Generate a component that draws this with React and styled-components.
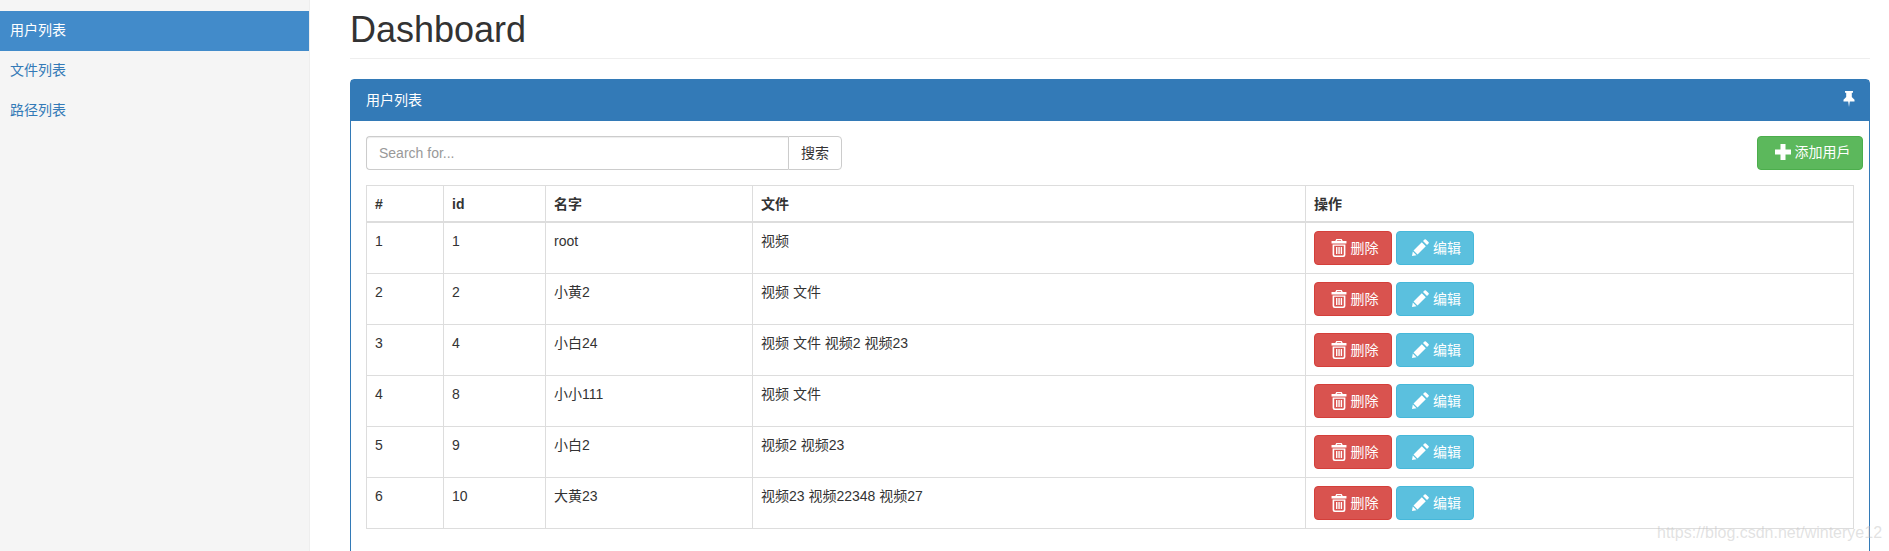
import React from 'react';
import styled, { createGlobalStyle } from 'styled-components';

const GlobalStyle = createGlobalStyle`
    html, body {
        margin: 0;
        padding: 0;
        height: 551px;
        overflow: hidden;
        background: #fff;
        color: #333;
        font-family: "Liberation Sans", "Noto Sans CJK SC", sans-serif;
        font-size: 14px;
        line-height: 20px;
    }
    * { box-sizing: border-box; }
`;

const users = [
    { no: 1, id: 1, name: 'root', files: '视频' },
    { no: 2, id: 2, name: '小黄2', files: '视频 文件' },
    { no: 3, id: 4, name: '小白24', files: '视频 文件 视频2 视频23' },
    { no: 4, id: 8, name: '小小111', files: '视频 文件' },
    { no: 5, id: 9, name: '小白2', files: '视频2 视频23' },
    { no: 6, id: 10, name: '大黄23', files: '视频23 视频22348 视频27' },
];

const columns = [
    { title: '#', width: 77 },
    { title: 'id', width: 102 },
    { title: '名字', width: 207 },
    { title: '文件', width: 553 },
    { title: '操作', width: 548 },
];

const Page = styled.div`
    display: flex;
    height: 551px;
    overflow: hidden;
`;

const Sidebar = styled.nav`
    width: 310px;
    flex: none;
    padding-top: 11px;
    background: #f5f5f5;
    border-right: 1px solid #eee;
`;

const NavItem = styled.a`
    display: block;
    height: 40px;
    padding: 9px 10px;
    background: ${props => props.$active ? '#428bca' : 'transparent'};
    color: ${props => props.$active ? '#fff' : '#337ab7'};
`;

const Main = styled.main`
    flex: 1;
    min-width: 0;
    padding: 0 19px 0 40px;
`;

const Title = styled.h1`
    margin: 0 0 20px;
    height: 59px;
    padding-top: 10px;
    border-bottom: 1px solid #eee;
    font-size: 36px;
    font-weight: 500;
    line-height: 40px;
`;

const Panel = styled.section`
    height: 600px;
    border: 1px solid #337ab7;
    border-radius: 4px;
`;

const PanelHeading = styled.header`
    display: flex;
    align-items: center;
    justify-content: space-between;
    height: 41px;
    padding: 0 13px 2px 15px;
    background: #337ab7;
    color: #fff;

    svg { margin-top: -2px; }
`;

const PanelBody = styled.div`
    padding: 15px;
`;

const Toolbar = styled.div`
    display: flex;
    justify-content: space-between;
    margin-bottom: 15px;
`;

const SearchGroup = styled.div`
    display: flex;
    width: 476px;
    height: 34px;
`;

const SearchInput = styled.input`
    flex: 1;
    min-width: 0;
    padding: 6px 12px;
    border: 1px solid #ccc;
    border-right: 0;
    border-radius: 4px 0 0 4px;
    color: #555;
    font: inherit;
    box-shadow: inset 0 1px 1px rgba(0, 0, 0, .075);
    &::placeholder { color: #999; opacity: 1; }
`;

const SearchButton = styled.button`
    width: 54px;
    padding: 0;
    background: #fff;
    border: 1px solid #ccc;
    border-radius: 0 4px 4px 0;
    color: #333;
    font: inherit;
`;

const Button = styled.button`
    display: inline-flex;
    align-items: center;
    justify-content: center;
    gap: 4px;
    width: ${props => props.$width || 78}px;
    height: 34px;
    padding: 0 0 0 3px;
    background: ${props => props.$bg};
    border: 1px solid ${props => props.$line};
    border-radius: 4px;
    color: #fff;
    font: inherit;
`;

const AddButton = styled(Button)`
    margin-right: -9px;
    padding: 0 0 2px 5px;
`;

const Table = styled.table`
    width: 1488px;
    table-layout: fixed;
    border-collapse: collapse;
`;

const Th = styled.th`
    height: 36px;
    padding: 8px 8px 6px;
    border: 1px solid #ddd;
    border-bottom-width: 2px;
    font-weight: 700;
    text-align: left;
    vertical-align: middle;
`;

const Td = styled.td`
    height: 51px;
    padding: 8px;
    border: 1px solid #ddd;
    vertical-align: top;
`;

const Actions = styled.div`
    display: flex;
    gap: 4px;
`;

const Watermark = styled.div`
    position: absolute;
    left: 1657px;
    top: 523px;
    color: rgba(190, 190, 190, .45);
    font-size: 16px;
    line-height: 20px;
    white-space: nowrap;
`;

const PinIcon = () => (
    <svg width="14" height="16" viewBox="0 0 14 16" fill="#fff">
        <path d="M3 0h8v1.800H9.800v4.200L12.500 8.800V10.500H7.800L7 16l-.8-5.500H1.500V8.800L4.200 6V1.800H3z" />
    </svg>
);

const PlusIcon = () => (
    <svg width="16" height="16" viewBox="0 0 16 16" fill="#fff">
        <path d="M5.500 0h5v5.500H16v5h-5.500V16h-5v-5.500H0v-5h5.500z" />
    </svg>
);

const TrashIcon = () => (
    <svg width="16" height="18" viewBox="0 0 15 18" fill="#fff" preserveAspectRatio="none">
        <path d="M5 0h5l1 2h3.500v2.500H.5V2H4zm.8 1.200L5.300 2h4.400l-.5-.8z" />
        <path fillRule="evenodd" d="M1.500 5.500h12V16a2 2 0 0 1-2 2h-8a2 2 0 0 1-2-2zm1.500 1.300V15.500a1 1 0 0 0 1 1h7a1 1 0 0 0 1-1V6.800z" />
        <path d="M4.700 8h1.300v7H4.700zM6.900 8h1.300v7H6.900zM9.100 8h1.300v7H9.100z" />
    </svg>
);

const PencilIcon = () => (
    <svg width="17" height="17" viewBox="0 0 17 17" fill="#fff">
        <path d="M12.500.5a1 1 0 0 1 1.400 0l2.600 2.600a1 1 0 0 1 0 1.400l-1.500 1.500-4-4zM9.800 3.200l4 4L5.500 15.500l-4-4z" />
        <path d="M.8 12.500l3.700 3.700L0 17z" />
    </svg>
);

const UserRow = ({user}) => {
    return (
        <tr>
            <Td>{user.no}</Td>
            <Td>{user.id}</Td>
            <Td>{user.name}</Td>
            <Td>{user.files}</Td>
            <Td>
                <Actions>
                    <Button $bg="#d9534f" $line="#d43f3a"><TrashIcon />删除</Button>
                    <Button $bg="#5bc0de" $line="#46b8da"><PencilIcon />编辑</Button>
                </Actions>
            </Td>
        </tr>
    )
}

export default function App() {
    return (
        <Page>
            <GlobalStyle />
            <Sidebar>
                <NavItem $active>用户列表</NavItem>
                <NavItem>文件列表</NavItem>
                <NavItem>路径列表</NavItem>
            </Sidebar>
            <Main>
                <Title>Dashboard</Title>
                <Panel>
                    <PanelHeading>
                        <span>用户列表</span>
                        <PinIcon />
                    </PanelHeading>
                    <PanelBody>
                        <Toolbar>
                            <SearchGroup>
                                <SearchInput placeholder="Search for..." />
                                <SearchButton>搜索</SearchButton>
                            </SearchGroup>
                            <AddButton $bg="#5cb85c" $line="#4cae4c" $width={106}><PlusIcon />添加用戶</AddButton>
                        </Toolbar>
                        <Table>
                            <colgroup>
                                {columns.map(col => <col key={col.title} width={col.width} />)}
                            </colgroup>
                            <thead>
                                <tr>
                                    {columns.map(col => <Th key={col.title}>{col.title}</Th>)}
                                </tr>
                            </thead>
                            <tbody>
                                {users.map(user => <UserRow key={user.no} user={user} />)}
                            </tbody>
                        </Table>
                    </PanelBody>
                </Panel>
            </Main>
            <Watermark>https://blog.csdn.net/winterye12</Watermark>
        </Page>
    )
}
